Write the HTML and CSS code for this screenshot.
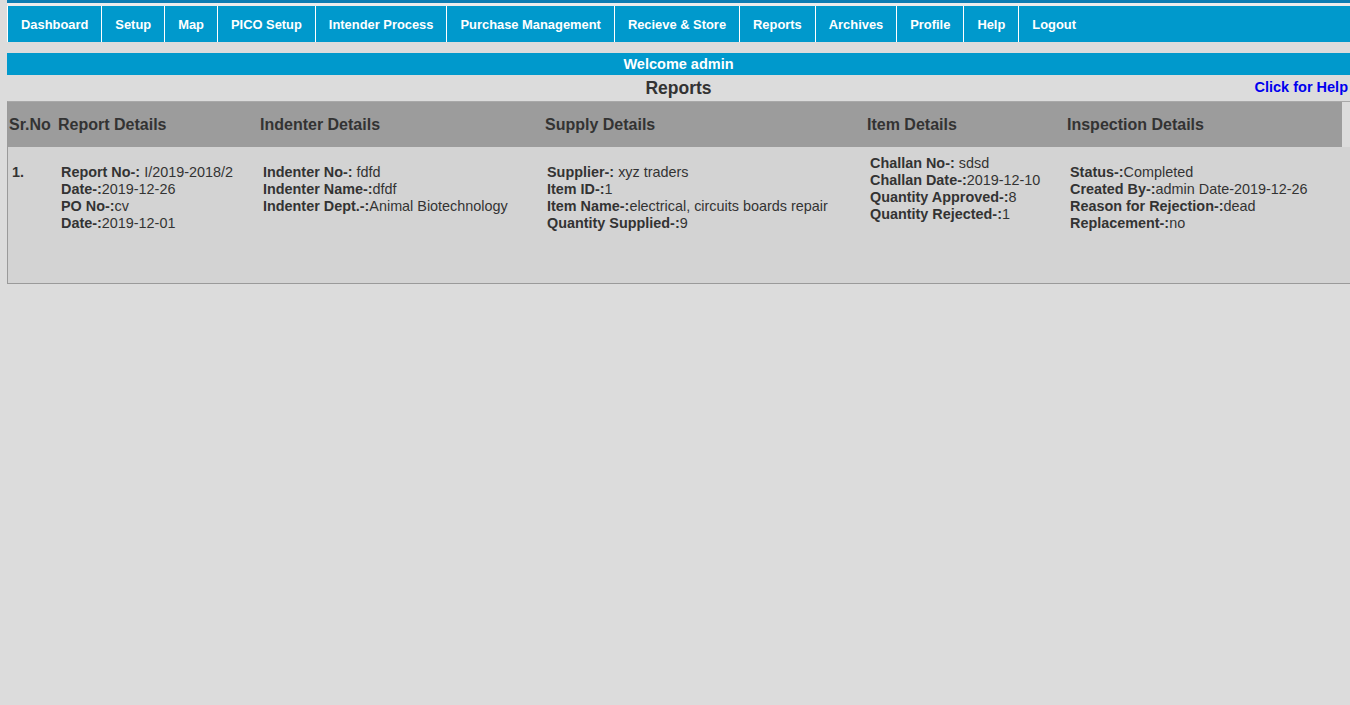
FILE: index.html
```html
<!DOCTYPE html>
<html>
<head>
<meta charset="utf-8">
<title>Reports</title>
<link rel="stylesheet" href="styles.css">
</head>
<body>
<div class="page">
  <div class="topstrip"></div>
  <nav class="nav">
    <a class="nav-item">Dashboard</a>
    <a class="nav-item">Setup</a>
    <a class="nav-item">Map</a>
    <a class="nav-item">PICO Setup</a>
    <a class="nav-item">Intender Process</a>
    <a class="nav-item">Purchase Management</a>
    <a class="nav-item">Recieve &amp; Store</a>
    <a class="nav-item">Reports</a>
    <a class="nav-item">Archives</a>
    <a class="nav-item">Profile</a>
    <a class="nav-item">Help</a>
    <a class="nav-item">Logout</a>
  </nav>
  <div class="welcome">Welcome admin</div>
  <div class="title-row">
    <h1 class="title">Reports</h1>
    <a class="help-link">Click for Help</a>
  </div>
  <div class="table">
    <div class="thead">
      <div class="th th-first">Sr.No</div>
      <div class="th">Report Details</div>
      <div class="th">Indenter Details</div>
      <div class="th">Supply Details</div>
      <div class="th">Item Details</div>
      <div class="th">Inspection Details</div>
    </div>
    <div class="trow">
      <div class="td td-first"><b>1.</b></div>
      <div class="td">
        <b>Report No-:</b> I/2019-2018/2<br>
        <b>Date-:</b>2019-12-26<br>
        <b>PO No-:</b>cv<br>
        <b>Date-:</b>2019-12-01
      </div>
      <div class="td">
        <b>Indenter No-:</b> fdfd<br>
        <b>Indenter Name-:</b>dfdf<br>
        <b>Indenter Dept.-:</b>Animal Biotechnology
      </div>
      <div class="td td-supply">
        <b>Supplier-:</b> xyz traders<br>
        <b>Item ID-:</b>1<br>
        <b>Item Name-:</b>electrical, circuits boards repair<br>
        <b>Quantity Supplied-:</b>9
      </div>
      <div class="td td-high">
        <b>Challan No-:</b> sdsd<br>
        <b>Challan Date-:</b>2019-12-10<br>
        <b>Quantity Approved-:</b>8<br>
        <b>Quantity Rejected-:</b>1
      </div>
      <div class="td">
        <b>Status-:</b>Completed<br>
        <b>Created By-:</b>admin Date-2019-12-26<br>
        <b>Reason for Rejection-:</b>dead<br>
        <b>Replacement-:</b>no
      </div>
    </div>
  </div>
</div>
</body>
</html>
```

FILE: styles.css
```css
html, body {
  margin: 0;
  padding: 0;
  background: #dcdcdc;
  overflow: hidden;
}

.page {
  margin-left: 7px;
  font-family: "Liberation Sans", Arial, sans-serif;
  color: #333;
}

.topstrip {
  height: 3px;
  background: #0b7db3;
  border-bottom: 3px solid #ececec;
}

.nav {
  display: flex;
  height: 36px;
  background: #0099cc;
}

.nav-item {
  display: flex;
  align-items: center;
  padding: 0 13px;
  border-left: 1px solid #ffffff;
  color: #ffffff;
  font-size: 12.9px;
  font-weight: bold;
  text-decoration: none;
  white-space: nowrap;
}

.welcome {
  margin-top: 11px;
  height: 22px;
  line-height: 22px;
  background: #0099cc;
  color: #ffffff;
  font-size: 14.5px;
  font-weight: bold;
  text-align: center;
}

.title-row {
  position: relative;
  height: 26px;
  display: flex;
  align-items: center;
  justify-content: center;
}

.title {
  margin: 0;
  font-size: 17.5px;
  font-weight: bold;
  color: #333;
}

.help-link {
  position: absolute;
  right: 2px;
  top: 4px;
  color: #0000ee;
  font-size: 14.5px;
  font-weight: bold;
  cursor: pointer;
}

.table {
  border-top: 1px solid #a8a8a8;
  border-left: 1px solid #9a9a9a;
  border-bottom: 1px solid #9a9a9a;
}

.thead,
.trow {
  display: grid;
  grid-template-columns: 48px 202px 285px 322px 200px 1fr;
}

.thead {
  width: 1334px;
  height: 45px;
  background: #9c9c9c;
  align-items: center;
}

.th {
  padding-left: 2px;
  font-size: 16px;
  font-weight: bold;
  color: #333;
  white-space: nowrap;
}

.th-first {
  padding-left: 1px;
}

.trow {
  height: 136px;
  background: #d3d3d3;
  align-items: start;
}

.td {
  padding: 17px 0 0 5px;
  font-size: 14.4px;
  line-height: 17px;
  color: #333;
  white-space: nowrap;
}

.td-first {
  padding-left: 4px;
}

.td-supply {
  padding-left: 4px;
}

.td-high {
  padding-top: 8px;
}
```
